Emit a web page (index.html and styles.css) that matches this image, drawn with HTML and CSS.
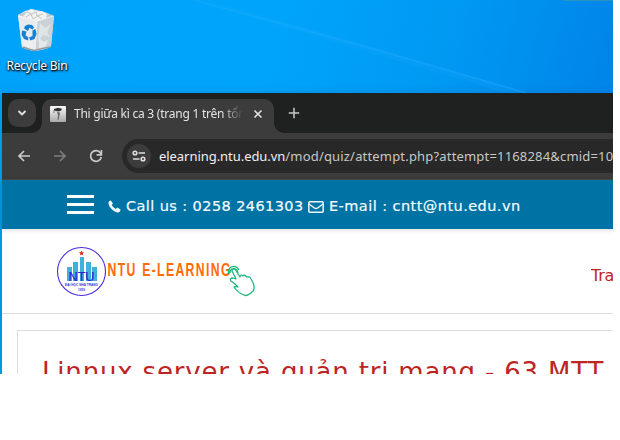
FILE: index.html
```
<!DOCTYPE html>
<html lang="vi">
<head>
<meta charset="utf-8">
<title>NTU E-Learning</title>
<link rel="stylesheet" href="styles.css">
</head>
<body>
<main class="desktop">
  <svg class="wallpaper" width="613" height="94" viewBox="0 0 613 94">
    <defs>
      <linearGradient id="beam" x1="0" y1="0" x2="1" y2="0"><stop offset="0" stop-color="#35b4ff" stop-opacity=".15"/><stop offset="1" stop-color="#18a4ff" stop-opacity=".6"/></linearGradient>
    </defs>
    <path d="M190 0H208Q360 43 533 94H510Q350 46 190 0Z" fill="url(#beam)" opacity=".35"/>
    <path d="M193 0Q360 44 526 93" fill="none" stroke="url(#beam)" stroke-width="1.6"/>
    <path d="M563 0H613" stroke="#2795bd" stroke-width="2"/>
  </svg>
  <div class="shortcut">
    <svg width="40" height="44" viewBox="0 0 40 44">
      <path d="M2 6 9 2 16 0 28 3 38 7 35 37Q34 40 18 42 8 40 6 38Z" fill="#dfe6ea"/>
      <path d="M2 6 21 12 19 42Q8 40 6 38Z" fill="#e7ebed"/>
      <path d="M21 12 38 7 35 37Q31 40 19 42Z" fill="#cbd2d7"/>
      <path d="M2 6 10 3 29 3 38 7 21 12Z" fill="#b9cad4"/>
      <path d="M7 7 11 3 15 0 19 3 26 2 31 5 30 9 23 12 14 10Z" fill="#f2f2ef"/>
      <path d="m11 3 5 2 4-2 1 4 6-2M10 8l5-3 2 5 5-3 4 3" fill="none" stroke="#c2c4c5"/>
      <path d="m24 14 5 5 6-4-4 8 3 5-7-2-5 7 1-11Z" fill="#e8ebec" opacity=".7"/>
      <path d="m23 29 5 4 4-2-2 6-7 3ZM5 25l6 6 6-2v10L8 37Z" fill="#f1f2f1" opacity=".7"/>
      <path d="m3 7 18 5 16-5M21 12l-2 29" fill="none" stroke="#f7fafa" stroke-width=".8"/>
      <path d="M7 38q9 4 13 3t14-3" fill="none" stroke="#929ca3" stroke-width="1.5"/>
      <g fill="#1680d1">
        <path d="M9 17 12 15.5 16 16 18 18.5 16.5 20.5 13.5 18.8 12 22 8 19.5Z"/>
        <path d="M16.5 21.5 19.5 20 20.5 25 18.5 30 14.5 31.5 13 28.5 16.5 27Z"/>
        <path d="M6 21.5 10.5 22.5 9.5 26.5 12.2 28V31.5L8 30 5.6 26Z"/>
      </g>
    </svg>
    <span>Recycle Bin</span>
  </div>

  <section class="browser">
    <div class="tabs">
      <div class="tab-search"><svg width="12" height="12" viewBox="0 0 12 12"><path d="m2.5 4 3.5 3.5L9.5 4" fill="none" stroke="#e4e4e4" stroke-width="1.8"/></svg></div>
      <div class="tab">
        <svg class="favicon" width="16" height="16" viewBox="0 0 16 16"><defs><linearGradient id="icon-bg" x2="0" y2="1"><stop stop-color="#fafafa"/><stop offset="1" stop-color="#aaa"/></linearGradient></defs><rect width="16" height="16" rx="1" fill="url(#icon-bg)"/><path d="m4 3 4-1.3 4 1-1 2-3 .8-4-1Z" fill="#333"/><path d="M4 4v3" stroke="#777"/><path d="m7 6 3 .5-.6 3.5-.8 4-1-.5.4-4Z" fill="#666"/></svg>
        <span class="tab-title">Thi giữa kì ca 3 (trang 1 trên tổn</span>
        <svg class="close" width="10" height="10" viewBox="0 0 10 10"><path d="m1.5 1.5 7 7m0-7-7 7" stroke="#e0e0e0" stroke-width="1.6"/></svg>
      </div>
      <svg class="plus" width="12" height="12" viewBox="0 0 12 12"><path d="M6 .8v10.4M.8 6h10.4" stroke="#c7c7c7" stroke-width="1.5"/></svg>
    </div>
    <div class="toolbar">
      <svg class="nav back" width="14" height="14" viewBox="0 0 14 14"><path d="M13 7H2m5-5L2 7l5 5" fill="none" stroke="#cacaca" stroke-width="1.7"/></svg>
      <svg class="nav forward" width="14" height="14" viewBox="0 0 14 14"><path d="M1 7h11M7 2l5 5-5 5" fill="none" stroke="#7d7d7d" stroke-width="1.7"/></svg>
      <svg class="nav" width="14" height="14" viewBox="0 0 14 14"><path d="M12.3 8A5.4 5.4 0 1 1 11.5 4L12.5 5.3" fill="none" stroke="#cacaca" stroke-width="1.7"/><path d="M12.4 1v4.9H7.6" fill="none" stroke="#cacaca" stroke-width="1.7"/></svg>
      <div class="address">
        <div class="settings"><svg width="14" height="12" viewBox="0 0 14 12"><g fill="none" stroke="#dedede" stroke-width="1.6"><circle cx="3" cy="3" r="1.8"/><path d="M6.5 3H13M1 9h6.5"/><circle cx="11" cy="9" r="1.8"/></g></svg></div>
        <span class="url"><b>elearning.ntu.edu.vn</b>/mod/quiz/attempt.php?attempt=1168284&amp;cmid=10</span>
      </div>
    </div>
    <div class="contact">
      <div class="menu"><i></i><i></i><i></i></div>
      <svg class="phone" width="13" height="13" viewBox="0 0 13 13"><path d="M.5 2.2Q1 .6 2.8.4L5 3.6 3.7 5.1Q5 7.6 7.8 9l1.5-1.4 3.2 1.9q.2 1.9-1.6 2.7-2.8 1-6.6-2.4Q.2 6 .5 2.2Z" fill="#f1f9fc"/></svg>
      <span class="call">Call us : 0258 2461303</span>
      <svg class="mail" width="16" height="12" viewBox="0 0 16 12"><rect x=".8" y=".8" width="14.4" height="10.4" rx="1" fill="none" stroke="#edf7fb" stroke-width="1.5"/><path d="m1 3 5.4 4q1.6 1.2 3.2 0L15 3" fill="none" stroke="#edf7fb" stroke-width="1.5"/></svg>
      <span class="email">E-mail : cntt@ntu.edu.vn</span>
    </div>
    <header class="site-head">
      <svg class="logo" width="200" height="52" viewBox="0 0 200 52">
        <circle cx="25.5" cy="25.5" r="24" fill="#fff" stroke="#4b2bdc" stroke-width="1.1"/>
        <path d="m25.500 4.500.9 1.700 1.900.1-1.500 1.300.5 1.900-1.800-1-1.700 1 .5-1.900-1.500-1.300 1.900-.1Z" fill="#df3029"/>
        <path d="M11 21h5v14h-5ZM17 16h5v19h-5ZM24 11h4v24h-4ZM30 16h5v19h-5ZM36 21h5v14h-5Z" fill="#42b0dc"/>
        <text class="mark" x="12.500" y="34.5" textLength="26" lengthAdjust="spacingAndGlyphs">NTU</text>
        <text class="tiny" x="9" y="40.2" textLength="33" lengthAdjust="spacingAndGlyphs">ĐẠI HỌC NHA TRANG</text>
        <text class="tiny" x="22" y="44.8" textLength="7" lengthAdjust="spacingAndGlyphs">1959</text>
        <text class="wordmark" transform="translate(51.5 30) scale(.68 1)">NTU E-LEARNING</text>
        <g class="pointer" fill="none" stroke="#20b87e" stroke-width="1.3" stroke-linejoin="round">
          <path d="M179 38 175 35Q173 32 177 32l3 1-4-8q0-3 3-2l5 8q0-3 3-1 1-2 4 1 3-1 4 2 5 8 2 12-6 6-9 4-6-2-10-8 2-1 4 0Z"/>
          <path d="M173 28q-2-4 2-7 5-2 8 3M174 27q0-4 3-4 4-1 5 4"/>
        </g>
      </svg>
      <span class="home">Tra</span>
    </header>
    <article class="course"><h1>Linnux server và quản trị mạng - 63.MTT</h1></article>
  </section>
</main>
</body>
</html>
```
FILE: styles.css
```
* { box-sizing: border-box; }
body { margin: 0; background: #fff; font-family: "Noto Sans", sans-serif; }
svg { display: block; flex: none; }
.desktop { width: 613px; height: 374px; overflow: hidden; position: relative; padding-left: 2px; background: linear-gradient(105deg, #00a3fa 0%, #00a5fb 43%, #0099f2 72%, #0084e8 100%) top / 613px 93px no-repeat, linear-gradient(#00a8fa, #009fe8); }
.wallpaper { position: absolute; left: 0; top: 0; }
.shortcut { height: 93px; width: 70px; padding-top: 9px; display: flex; flex-direction: column; align-items: center; color: #fff; font-size: 12px; line-height: 16px; position: relative; }
.shortcut svg { margin-right: 2px; }
.shortcut span { margin-top: 5px; white-space: nowrap; letter-spacing: -.2px; text-shadow: 1px 1px 2px #000, 0 1px 2px #000; }
.browser { height: 281px; background: #fff; position: relative; box-shadow: 0 0 8px rgba(0,55,100,.18); }
.tabs { height: 40px; background: #1f2120; display: flex; }
.tab-search { width: 28px; height: 28px; margin: 6px 0 0 6px; border-radius: 10px; background: #3c3c3c; display: grid; place-items: center; }
.tab { width: 232px; height: 34px; margin: 6px 0 0 6px; border-radius: 10px 10px 0 0; background: #3c3c3c; display: flex; align-items: center; padding: 0 11px 5px 8px; position: relative; }
.tab::before, .tab::after { content: ""; position: absolute; bottom: 0; width: 10px; height: 10px; }
.tab::before { left: -10px; background: radial-gradient(circle at 0 0, transparent 9.5px, #3c3c3c 10px); }
.tab::after { right: -10px; background: radial-gradient(circle at 100% 0, transparent 9.5px, #3c3c3c 10px); }
.tab-title { flex: none; margin-left: 8px; width: 168px; overflow: hidden; white-space: nowrap; font-size: 12px; letter-spacing: -.24px; line-height: 20px; color: #e3e3e3; mask-image: linear-gradient(90deg, #000 148px, transparent 169px); }
.close { margin-left: 11px; }
.plus { margin: 14px 0 0 14px; }
.toolbar { height: 47px; background: #3c3c3c; border-bottom: 1px solid #4a4747; display: flex; align-items: center; padding: 0 0 1px 15px; }
.nav { margin-right: 22px; }
.address { height: 34px; flex: 1; margin-left: -3px; border-radius: 17px 0 0 17px; background: #282828; display: flex; align-items: center; padding-left: 5px; overflow: hidden; }
.settings { flex: none; width: 24px; height: 24px; border-radius: 50%; background: #3c3c3c; display: grid; place-items: center; }
.url { margin-left: 8px; font-size: 13px; letter-spacing: .18px; white-space: nowrap; color: #c7c7c7; }
.url b { font-weight: 400; letter-spacing: -.05px; color: #f0f0f0; }
.contact { height: 49px; background: #0073a5; display: flex; align-items: center; padding: 3px 0 0 65px; color: #f4fbff; font: 14.5px "DejaVu Sans", sans-serif; -webkit-text-stroke: .2px #f4fbff; position: relative; z-index: 1; box-shadow: 0 1px 5px rgba(0,0,0,.15); }
.menu { width: 27px; height: 19px; display: flex; flex-direction: column; justify-content: space-between; margin-bottom: 3px; }
.menu i { height: 3px; background: #fff; }
.phone { margin-left: 14px; }
.call { margin-left: 5px; width: 177px; white-space: nowrap; letter-spacing: .41px; }
.mail { margin: 1px 5px 0 5px; }
.email { white-space: nowrap; letter-spacing: .44px; }
.site-head { height: 85px; border-bottom: 1px solid #dcdcdc; display: flex; }
.logo { margin: 17px 0 0 54px; }
.mark { font: 13px "Liberation Sans", sans-serif; fill: #3020d5; stroke: #3020d5; stroke-width: .2px; }
.tiny { font: bold 4px "Liberation Sans", sans-serif; fill: #4130d5; }
.wordmark { font: bold 18px "Liberation Sans", sans-serif; letter-spacing: 2px; word-spacing: 1px; fill: #ff6b08; }
.home { margin: 35px 0 0 335px; white-space: nowrap; color: #be2424; font: 16px/24px "DejaVu Sans", sans-serif; letter-spacing: -.2px; width: 22px; overflow: hidden; }
.course { margin: 16px 0 0 15px; height: 100px; border: 1px solid #dcdcdc; border-right: 0; padding: 23px 0 0 24px; }
h1 { margin: 0; color: #be2424; font: 26px/36px "DejaVu Sans", sans-serif; letter-spacing: .82px; white-space: nowrap; }
```
